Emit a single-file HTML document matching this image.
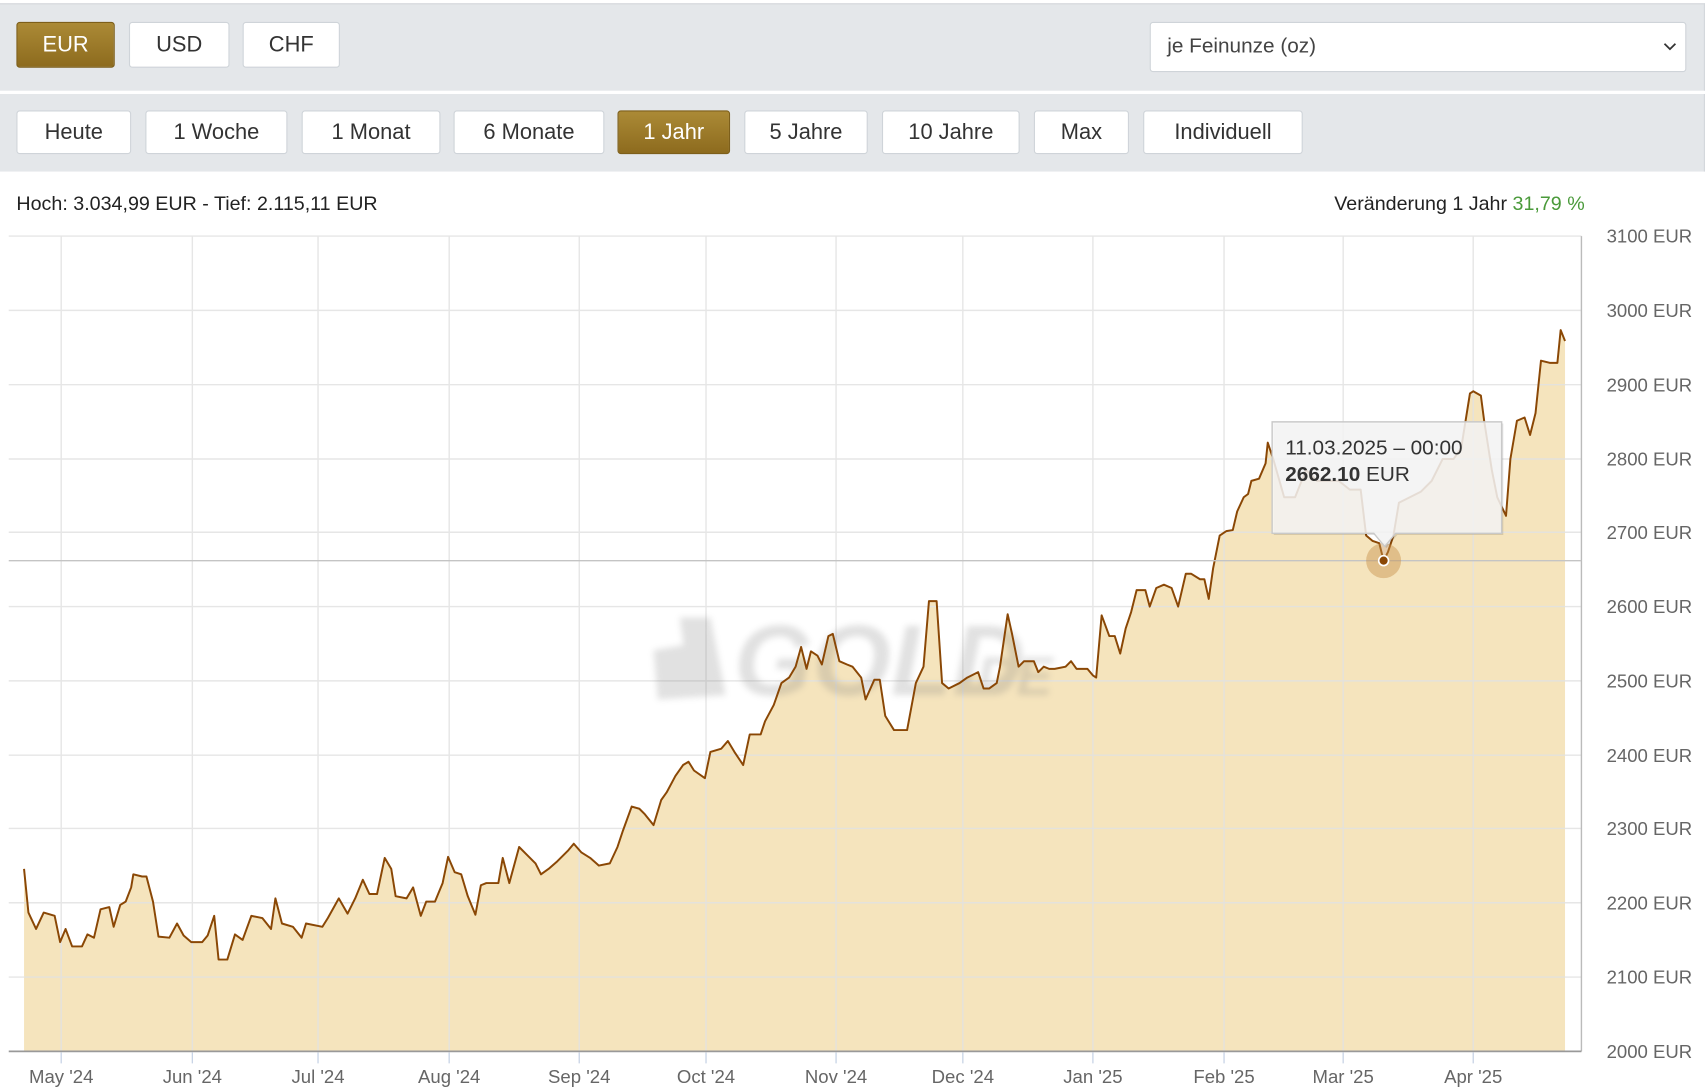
<!DOCTYPE html>
<html><head><meta charset="utf-8"><style>
html,body{margin:0;padding:0;background:#fff;width:1706px;height:1088px;overflow:hidden}
#w{position:absolute;left:0;top:0;width:1561px;height:996px;transform:scale(1.0929);transform-origin:0 0;font-family:"Liberation Sans",sans-serif;color:#222}
.bar{position:absolute;left:0;width:1559px;background:#e4e7ea}
.b{position:absolute;height:40px;box-sizing:border-box;border:1px solid #cfd4d9;border-radius:3px;background:#fff;font-size:20px;line-height:38px;text-align:center;color:#333}
.a{background:linear-gradient(#ab8a36,#8d6b1e);border-color:#7d5f1a;color:#fff}
</style></head><body><div id="w">
<div class="bar" style="top:3px;height:79px;border-top:1px solid #d3d7db;border-right:1px solid #d3d7db"></div>
<div class="bar" style="top:86px;height:71px;border-right:1px solid #d3d7db"></div>
<div class="b a" style="left:15px;top:20px;width:90px;height:42px;line-height:40px">EUR</div>
<div class="b" style="left:118px;top:20px;width:92px;height:42px;line-height:40px">USD</div>
<div class="b" style="left:222px;top:20px;width:89px;height:42px;line-height:40px">CHF</div>
<div class="b" style="left:1052px;top:20px;width:491px;height:46px;line-height:44px;text-align:left;padding-left:15px;font-size:19px;color:#444">je Feinunze (oz)<svg style="position:absolute;right:8px;top:18px" width="12" height="8" viewBox="0 0 12 8"><path d="M1 1l5 5 5-5" fill="none" stroke="#333" stroke-width="1.6"/></svg></div>
<div class="b" style="left:15px;top:101px;width:105px">Heute</div>
<div class="b" style="left:133px;top:101px;width:130px">1 Woche</div>
<div class="b" style="left:276px;top:101px;width:127px">1 Monat</div>
<div class="b" style="left:415px;top:101px;width:138px">6 Monate</div>
<div class="b a" style="left:565px;top:101px;width:103px">1 Jahr</div>
<div class="b" style="left:681px;top:101px;width:113px">5 Jahre</div>
<div class="b" style="left:807px;top:101px;width:126px">10 Jahre</div>
<div class="b" style="left:946px;top:101px;width:87px">Max</div>
<div class="b" style="left:1046px;top:101px;width:146px">Individuell</div>
<div style="position:absolute;left:15px;top:176px;font-size:18px">Hoch: 3.034,99 EUR - Tief: 2.115,11 EUR</div>
<div style="position:absolute;right:111px;top:176px;font-size:18px">Veränderung 1 Jahr <span style="color:#4a9a3a">31,79 %</span></div>
<svg style="position:absolute;left:0;top:0" width="1561" height="996" viewBox="0 0 1561 996" font-family="Liberation Sans,sans-serif">
<defs><filter id="bl"><feGaussianBlur stdDeviation="3"/></filter></defs>
<path d="M22,962 L22,795 L26,835 L33,850 L40,835 L50,838 L55,862 L60,850 L66,866 L75,866 L80,855 L86,858 L92,832 L100,830 L104,848 L110,828 L115,825 L120,812 L122,800 L130,802 L134,802 L140,825 L145,857 L155,858 L162,845 L168,856 L175,862 L185,862 L190,856 L196,838 L200,878 L208,878 L215,855 L222,860 L230,838 L240,840 L248,850 L252,822 L258,845 L268,848 L276,858 L280,845 L295,848 L300,840 L310,822 L318,836 L325,822 L332,805 L338,818 L345,818 L352,785 L358,795 L362,820 L372,822 L378,812 L385,838 L390,825 L398,825 L405,808 L410,784 L416,798 L422,800 L428,820 L435,837 L440,810 L445,808 L456,808 L460,785 L466,808 L475,775 L482,782 L490,790 L495,800 L502,795 L510,788 L520,778 L525,772 L532,780 L540,785 L548,792 L558,790 L565,775 L570,760 L578,738 L585,740 L590,745 L598,755 L605,732 L610,725 L618,710 L625,700 L630,697 L635,705 L645,712 L650,688 L660,685 L666,678 L672,688 L680,700 L686,672 L696,672 L700,660 L708,645 L715,625 L722,620 L728,610 L733,592 L738,612 L742,596 L748,600 L752,608 L758,582 L762,580 L768,605 L775,608 L780,610 L788,620 L792,640 L800,622 L805,622 L810,655 L818,668 L830,668 L838,625 L845,610 L850,550 L857,550 L862,625 L868,630 L878,625 L885,620 L895,615 L900,630 L905,630 L912,625 L915,610 L922,562 L926,580 L932,610 L937,605 L946,605 L950,615 L955,610 L960,612 L965,612 L975,610 L980,605 L985,612 L995,612 L1000,618 L1003,620 L1008,563 L1015,582 L1020,582 L1025,598 L1030,575 L1035,560 L1040,540 L1048,540 L1052,555 L1058,538 L1065,535 L1072,538 L1078,555 L1085,525 L1090,525 L1098,530 L1102,530 L1106,548 L1110,520 L1116,490 L1122,486 L1128,485 L1132,468 L1138,455 L1142,452 L1145,440 L1152,438 L1158,424 L1160,405 L1165,420 L1175,455 L1185,455 L1195,430 L1205,440 L1215,440 L1225,440 L1235,448 L1245,448 L1250,490 L1256,495 L1262,497 L1266,513 L1270,505 L1275,490 L1280,460 L1290,455 L1300,450 L1310,440 L1320,420 L1330,420 L1337,410 L1345,360 L1348,358 L1355,362 L1358,385 L1365,430 L1370,455 L1378,472 L1382,420 L1388,385 L1395,382 L1400,398 L1405,378 L1410,330 L1418,332 L1425,332 L1428,302 L1432,312 L1432,962 Z" fill="#f5e4bd"/>
<g stroke="#e2e2e2" stroke-width="1.3" opacity="0.85">
<path d="M8,216H1447M8,284H1447M8,352H1447M8,420H1447M8,487H1447M8,555H1447M8,623H1447M8,691H1447M8,758H1447M8,826H1447M8,894H1447"/>
<path d="M56,216V962M176,216V962M291,216V962M411,216V962M530,216V962M646,216V962M765,216V962M881,216V962M1000,216V962M1120,216V962M1229,216V962M1348,216V962"/>
</g>
<path d="M1447,216V962" stroke="#bbb" stroke-width="1.3"/>
<g opacity="0.22" filter="url(#bl)" fill="#777"><path d="M598,595 L628,590 L632,638 L602,640Z"/><path d="M622,565 L650,565 L664,636 L632,638Z"/><text x="672" y="636" font-size="92" font-weight="bold" font-style="italic">GOLD</text><text x="880" y="636" font-size="50" font-weight="bold" font-style="italic">.DE</text></g>
<path d="M22,795 L26,835 L33,850 L40,835 L50,838 L55,862 L60,850 L66,866 L75,866 L80,855 L86,858 L92,832 L100,830 L104,848 L110,828 L115,825 L120,812 L122,800 L130,802 L134,802 L140,825 L145,857 L155,858 L162,845 L168,856 L175,862 L185,862 L190,856 L196,838 L200,878 L208,878 L215,855 L222,860 L230,838 L240,840 L248,850 L252,822 L258,845 L268,848 L276,858 L280,845 L295,848 L300,840 L310,822 L318,836 L325,822 L332,805 L338,818 L345,818 L352,785 L358,795 L362,820 L372,822 L378,812 L385,838 L390,825 L398,825 L405,808 L410,784 L416,798 L422,800 L428,820 L435,837 L440,810 L445,808 L456,808 L460,785 L466,808 L475,775 L482,782 L490,790 L495,800 L502,795 L510,788 L520,778 L525,772 L532,780 L540,785 L548,792 L558,790 L565,775 L570,760 L578,738 L585,740 L590,745 L598,755 L605,732 L610,725 L618,710 L625,700 L630,697 L635,705 L645,712 L650,688 L660,685 L666,678 L672,688 L680,700 L686,672 L696,672 L700,660 L708,645 L715,625 L722,620 L728,610 L733,592 L738,612 L742,596 L748,600 L752,608 L758,582 L762,580 L768,605 L775,608 L780,610 L788,620 L792,640 L800,622 L805,622 L810,655 L818,668 L830,668 L838,625 L845,610 L850,550 L857,550 L862,625 L868,630 L878,625 L885,620 L895,615 L900,630 L905,630 L912,625 L915,610 L922,562 L926,580 L932,610 L937,605 L946,605 L950,615 L955,610 L960,612 L965,612 L975,610 L980,605 L985,612 L995,612 L1000,618 L1003,620 L1008,563 L1015,582 L1020,582 L1025,598 L1030,575 L1035,560 L1040,540 L1048,540 L1052,555 L1058,538 L1065,535 L1072,538 L1078,555 L1085,525 L1090,525 L1098,530 L1102,530 L1106,548 L1110,520 L1116,490 L1122,486 L1128,485 L1132,468 L1138,455 L1142,452 L1145,440 L1152,438 L1158,424 L1160,405 L1165,420 L1175,455 L1185,455 L1195,430 L1205,440 L1215,440 L1225,440 L1235,448 L1245,448 L1250,490 L1256,495 L1262,497 L1266,513 L1270,505 L1275,490 L1280,460 L1290,455 L1300,450 L1310,440 L1320,420 L1330,420 L1337,410 L1345,360 L1348,358 L1355,362 L1358,385 L1365,430 L1370,455 L1378,472 L1382,420 L1388,385 L1395,382 L1400,398 L1405,378 L1410,330 L1418,332 L1425,332 L1428,302 L1432,312" fill="none" stroke="#8a4705" stroke-width="1.8" stroke-linejoin="round"/>
<path d="M8,513H1447" stroke="#c4c4c4" stroke-width="1.3"/>
<path d="M8,962H1447" stroke="#999" stroke-width="1.5"/>
<g stroke="#c8d4e6" stroke-width="1.2"><path d="M56,963V973M176,963V973M291,963V973M411,963V973M530,963V973M646,963V973M765,963V973M881,963V973M1000,963V973M1120,963V973M1229,963V973M1348,963V973"/></g>
<circle cx="1266" cy="513" r="16" fill="#c8904a" opacity="0.45"/>
<circle cx="1266" cy="513" r="4.5" fill="#8a4705" stroke="#fff" stroke-width="1.5"/>
<g>
<path d="M1164,386 H1374 V488 H1277 L1267,500 L1257,488 H1164 Z" fill="#000" opacity="0.12" transform="translate(1.5,1.5)"/>
<path d="M1164,386 H1374 V488 H1277 L1267,500 L1257,488 H1164 Z" fill="#f7f7f7" fill-opacity="0.86" stroke="#c9c9c9" stroke-width="1.3"/>
<text x="1176" y="416" font-size="19" fill="#333">11.03.2025 – 00:00</text>
<text x="1176" y="440" font-size="19" fill="#333"><tspan font-weight="bold">2662.10</tspan> EUR</text>
</g>
<g font-size="17" fill="#666">
<text x="1470" y="222">3100 EUR</text><text x="1470" y="290">3000 EUR</text><text x="1470" y="358">2900 EUR</text><text x="1470" y="426">2800 EUR</text><text x="1470" y="493">2700 EUR</text><text x="1470" y="561">2600 EUR</text><text x="1470" y="629">2500 EUR</text><text x="1470" y="697">2400 EUR</text><text x="1470" y="764">2300 EUR</text><text x="1470" y="832">2200 EUR</text><text x="1470" y="900">2100 EUR</text><text x="1470" y="968">2000 EUR</text>
</g>
<g font-size="17" fill="#666" text-anchor="middle">
<text x="56" y="991">May '24</text><text x="176" y="991">Jun '24</text><text x="291" y="991">Jul '24</text><text x="411" y="991">Aug '24</text><text x="530" y="991">Sep '24</text><text x="646" y="991">Oct '24</text><text x="765" y="991">Nov '24</text><text x="881" y="991">Dec '24</text><text x="1000" y="991">Jan '25</text><text x="1120" y="991">Feb '25</text><text x="1229" y="991">Mar '25</text><text x="1348" y="991">Apr '25</text>
</g>
</svg>
</div></body></html>
